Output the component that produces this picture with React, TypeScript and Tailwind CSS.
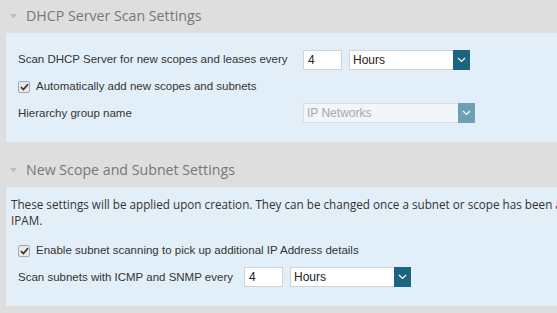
import React from "react";

function Chevron({ color = "#ffffff" }: { color?: string }) {
  return (
    <svg width="9" height="6" viewBox="0 0 9 6" fill="none">
      <path d="M1 1 L4.5 4.5 L8 1" stroke={color} strokeWidth="1.2" />
    </svg>
  );
}

function Select({ value, width, disabled }: { value: string; width: string; disabled?: boolean }) {
  return (
    <div
      className={`flex h-[20px] ${width} border ${disabled ? "border-[#d8dde0] bg-[#f3f6f8]" : "border-[#cfd4d8] bg-white"}`}
    >
      <div
        className={`flex-1 flex items-center pl-[3px] text-[12px] ${disabled ? "text-[#a8a8a8]" : "text-[#222]"}`}
      >
        {value}
      </div>
      <div
        className={`w-[17px] -my-px -mr-px flex items-center justify-center ${disabled ? "bg-[#6e9fb3]" : "bg-[#1c6580]"}`}
      >
        <Chevron />
      </div>
    </div>
  );
}

function NumInput({ value }: { value: string }) {
  return (
    <div className="flex items-center h-[20px] w-[39px] border border-[#cfd4d8] bg-white pl-[4px] text-[12px] text-[#222]">
      {value}
    </div>
  );
}

function Check({ label }: { label: string }) {
  return (
    <div className="flex items-center gap-[6px]">
      <div className="w-[12px] h-[12px] rounded-[2px] border border-[#a9a9a9] bg-[#e9e9e9] flex items-center justify-center">
        <svg width="9" height="8" viewBox="0 0 9 8">
          <path d="M1 4.2 L3.4 6.6 L8 1.2" stroke="#333" strokeWidth="1.7" fill="none" />
        </svg>
      </div>
      <span>{label}</span>
    </div>
  );
}

function Header({ title }: { title: string }) {
  return (
    <div className="flex items-center h-[33px] pl-[10px] gap-[9px]" style={{ fontFamily: '"Open Sans", sans-serif' }}>
      <svg width="7" height="5" viewBox="0 0 7 5">
        <path d="M0 0 L7 0 L3.5 4.5 Z" fill="#bdbdbd" />
      </svg>
      <span className="text-[14.2px] text-[#777] leading-none">{title}</span>
    </div>
  );
}

export default function App() {
  return (
    <div
      className="w-[557px] h-[313px] overflow-hidden bg-[#dedede] text-[11.5px] text-[#333]"
      style={{ fontFamily: '"Liberation Sans", Arial, sans-serif' }}
    >
      <div className="w-[640px]">
        <Header title="DHCP Server Scan Settings" />
        <div className="ml-[6px] bg-[#e3eff8] h-[109px] pl-[12px] pt-[17px]">
          <div className="flex items-center">
            <span className="w-[285px]">Scan DHCP Server for new scopes and leases every</span>
            <NumInput value="4" />
            <div className="ml-[7px]">
              <Select value="Hours" width="w-[121px]" />
            </div>
          </div>
          <div className="mt-[8px]">
            <Check label="Automatically add new scopes and subnets" />
          </div>
          <div className="flex items-center mt-[8px]">
            <span className="w-[285px]">Hierarchy group name</span>
            <Select value="IP Networks" width="w-[172px]" disabled />
          </div>
        </div>
        <div className="h-[12px]" />
        <Header title="New Scope and Subnet Settings" />
        <div className="ml-[6px] bg-[#e3eff8] h-[119px] pt-[9px]">
          <p
            className="pl-[5px] text-[11.7px] leading-[16px] text-[#333] whitespace-nowrap"
            style={{ fontFamily: '"Open Sans", sans-serif' }}
          >
            These settings will be applied upon creation. They can be changed once a subnet or scope has been added to
            <br />
            IPAM.
          </p>
          <div className="pl-[12px] mt-[14px]">
            <Check label="Enable subnet scanning to pick up additional IP Address details" />
          </div>
          <div className="flex items-center pl-[12px] mt-[8px]">
            <span className="w-[226px]">Scan subnets with ICMP and SNMP every</span>
            <NumInput value="4" />
            <div className="ml-[7px]">
              <Select value="Hours" width="w-[121px]" />
            </div>
          </div>
        </div>
      </div>
    </div>
  );
}
